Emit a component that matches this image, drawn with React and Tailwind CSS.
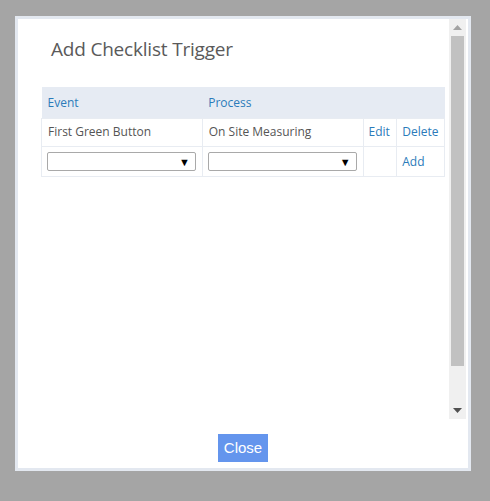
import React from "react";

const font = { fontFamily: '"Open Sans", "Noto Sans", sans-serif' };

const FakeSelect = () => (
  <div className="flex h-[19px] w-[149px] items-center justify-end rounded-[2px] border border-[#a9a9a9] bg-white pr-[5px]">
    <span className="text-[11px] leading-none text-black">▼</span>
  </div>
);

export default function App() {
  return (
    <div className="h-[501px] w-[490px] overflow-hidden bg-[#a5a5a5] pl-[15px] pt-[16px]" style={font}>
      <div className="flex h-[455px] w-[456px] flex-col border-[3px] border-[#e3e8f0] bg-white">
        {/* scroll area */}
        <div className="flex h-[400px]">
          <div className="flex-1 pl-[23px] pr-[4px]">
            <h1 className="ml-[10px] mt-[18px] text-[19px] font-normal leading-[24px] tracking-[-0.2px] text-[#5a5a5a]">
              Add Checklist Trigger
            </h1>
            <table className="mt-[26px] w-[404px] border-collapse text-[12px] text-[#555]">
              <thead>
                <tr className="h-[31px] bg-[#e6ebf3]">
                  <th className="w-[161px] pl-[6px] pt-[2px] text-left font-normal text-[#2b7bba]">Event</th>
                  <th className="w-[161px] pl-[6px] pt-[2px] text-left font-normal text-[#2b7bba]">Process</th>
                  <th className="w-[34px]"></th>
                  <th className="w-[48px]"></th>
                </tr>
              </thead>
              <tbody>
                <tr className="h-[28px]">
                  <td className="border border-[#e8ecf2] pl-[6px]">First Green Button</td>
                  <td className="border border-[#e8ecf2] pl-[6px]">On Site Measuring</td>
                  <td className="border border-[#e8ecf2] pl-[5px] text-[#2b7bba]">Edit</td>
                  <td className="border border-[#e8ecf2] pl-[5px] text-[#2b7bba]">Delete</td>
                </tr>
                <tr className="h-[30px]">
                  <td className="border border-[#e8ecf2] pl-[5px]"><FakeSelect /></td>
                  <td className="border border-[#e8ecf2] pl-[5px]"><FakeSelect /></td>
                  <td className="border border-[#e8ecf2]"></td>
                  <td className="border border-[#e8ecf2] pl-[5px] pt-[2px] text-[#2b7bba]">Add</td>
                </tr>
              </tbody>
            </table>
          </div>
          {/* scrollbar */}
          <div className="mr-[2px] flex w-[17px] flex-col bg-[#f0f0f0]">
            <div className="flex h-[17px] items-center justify-center">
              <svg width="9" height="5" viewBox="0 0 9 5"><path d="M0 5 L4.5 0 L9 5 Z" fill="#a3a3a3" /></svg>
            </div>
            <div className="mx-[2px] h-[330px] bg-[#c1c1c1]"></div>
            <div className="flex-1"></div>
            <div className="flex h-[17px] items-center justify-center">
              <svg width="9" height="5" viewBox="0 0 9 5"><path d="M0 0 L9 0 L4.5 5 Z" fill="#505050" /></svg>
            </div>
          </div>
        </div>
        <div className="flex flex-1 justify-center pt-[15px]">
          <button
            className="h-[28px] w-[50px] bg-[#6495ed] text-[15px] text-white"
            style={{ fontFamily: '"Liberation Sans", Arial, sans-serif' }}
          >
            Close
          </button>
        </div>
      </div>
    </div>
  );
}
